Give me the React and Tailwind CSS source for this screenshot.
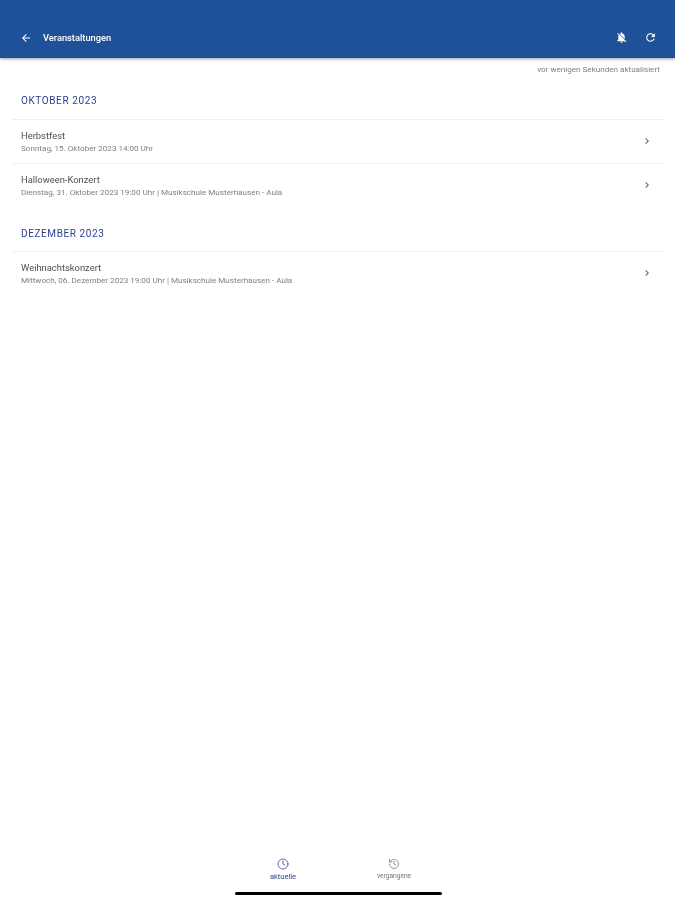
import { Clock, History } from "lucide-react";

const sections = [
  {
    title: "OKTOBER 2023",
    spacing: "mt-5 mb-3",
    items: [
      { title: "Herbstfest", sub: "Sonntag, 15. Oktober 2023 14:00 Uhr" },
      { title: "Halloween-Konzert", sub: "Dienstag, 31. Oktober 2023 19:00 Uhr | Musikschule Musterhausen - Aula" },
    ],
  },
  {
    title: "DEZEMBER 2023",
    spacing: "mt-[21px] mb-[11px]",
    items: [
      { title: "Weihnachtskonzert", sub: "Mittwoch, 06. Dezember 2023 19:00 Uhr | Musikschule Musterhausen - Aula" },
    ],
  },
];

function MaterialIcon({ d, className }) {
  return (
    <svg viewBox="0 0 24 24" fill="currentColor" className={className}>
      <path d={d} />
    </svg>
  );
}

const arrowBack = "M20 11H7.83l5.59-5.59L12 4l-8 8 8 8 1.41-1.41L7.83 13H20v-2z";
const bellOff = "M20 18.69L7.84 6.14 5.27 3.49 4 4.76l2.8 2.8v.01c-.52.99-.8 2.16-.8 3.42v5l-2 2v1h13.73l2 2L21 19.72l-1-1.03zM12 22c1.11 0 2-.89 2-2h-4c0 1.11.89 2 2 2zm6-7.32V11c0-3.08-1.64-5.64-4.5-6.32V4c0-.83-.67-1.5-1.5-1.5s-1.5.67-1.5 1.5v.68c-.15.03-.29.08-.42.12-.1.03-.2.07-.3.11h-.01c-.2.08-.4.18-.59.28-.1.05-.2.11-.3.17L18 14.68z";
const refresh = "M17.65 6.35C16.2 4.9 14.21 4 12 4c-4.42 0-7.99 3.58-7.99 8s3.57 8 7.99 8c3.73 0 6.84-2.55 7.73-6h-2.08c-.82 2.33-3.04 4-5.65 4-3.31 0-6-2.69-6-6s2.69-6 6-6c1.66 0 3.14.69 4.22 1.78L13 11h7V4l-2.35 2.35z";
const chevron = "M10 6L8.59 7.41 13.17 12l-4.58 4.59L10 18l6-6z";

export default function App() {
  return (
    <div className="relative flex min-h-[900px] flex-col bg-white font-['Roboto',sans-serif] blur-[0.5px]">
      {/* Header */}
      <div className="flex h-[58px] items-end bg-[#1f519b] pb-[14px] pl-[20px] pr-[18px] text-white shadow-[0_1px_3px_rgba(0,0,0,0.4)]">
        <MaterialIcon d={arrowBack} className="h-3 w-3" />
        <span className="ml-[11px] text-[9.3px] font-medium leading-3">Veranstaltungen</span>
        <MaterialIcon d={bellOff} className="ml-auto h-[13px] w-[13px]" />
        <MaterialIcon d={refresh} className="ml-4 h-[13px] w-[13px]" />
      </div>

      <div className="mt-[6px] pr-[15px] text-right text-[8.1px] leading-[10px] text-[#808080]">
        vor wenigen Sekunden aktualisiert
      </div>

      {/* Events */}
      <div className="flex-1 pl-3 pr-[11px] pt-[1px]">
        {sections.map((section) => (
          <div key={section.title}>
            <h2 className={`${section.spacing} pl-[9px] text-[10px] font-normal leading-[12px] tracking-[0.6px] text-[#2b3f8f]`}>
              {section.title}
            </h2>
            {section.items.map((item) => (
              <div key={item.title} className="flex h-[44px] items-center border-t border-[#efefef] pb-[1px] pl-[9px] pr-[11px]">
                <div className="flex-1">
                  <div className="text-[9.4px] leading-[12px] text-[#505050]">{item.title}</div>
                  <div className="mt-[1px] text-[8.1px] leading-[10px] text-[#808080]">{item.sub}</div>
                </div>
                <MaterialIcon d={chevron} className="h-3 w-3 text-[#616161]" />
              </div>
            ))}
          </div>
        ))}
      </div>

      {/* Bottom nav */}
      <div className="mb-[19px] ml-[2px] flex justify-center gap-[71px]">
        <div className="flex w-[40px] flex-col items-center text-[#2b3f8f]">
          <Clock className="h-3 w-3" strokeWidth={1.5} />
          <span className="mt-[2px] text-[7.5px] leading-[9px]">aktuelle</span>
        </div>
        <div className="flex w-[40px] flex-col items-center text-[#757575]">
          <History className="h-3 w-3" strokeWidth={1.5} />
          <span className="mt-[2px] text-[6.6px] leading-[9px]">vergangene</span>
        </div>
      </div>

      {/* Home indicator */}
      <div className="absolute bottom-[5px] left-[235px] h-[3px] w-[207px] rounded-full bg-black" />
    </div>
  );
}
